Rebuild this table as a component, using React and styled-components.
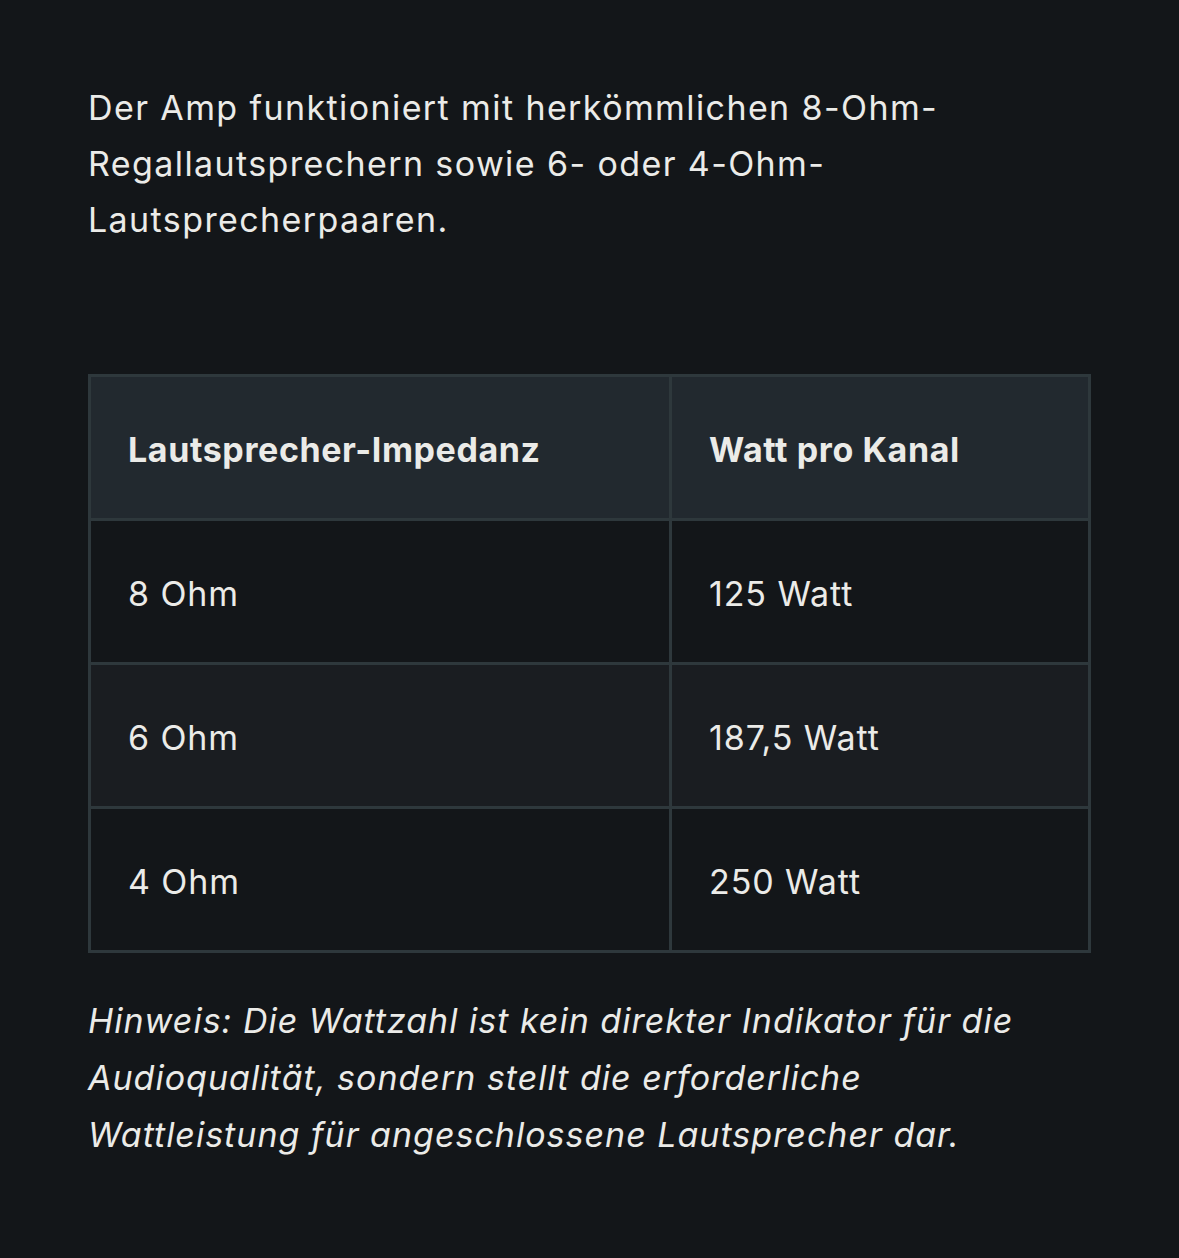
import styled, { createGlobalStyle } from "styled-components";

const GlobalStyle = createGlobalStyle`
  html, body {
    margin: 0;
    padding: 0;
    background: #131619;
  }
`;

const Page = styled.div`
  min-height: 1258px;
  box-sizing: border-box;
  padding: 80px 88px 0 88px;
  background: #131619;
  color: #ebebe8;
  font-family: Inter, "Noto Sans", sans-serif;
`;

const Intro = styled.p`
  margin: 0;
  font-size: 34px;
  line-height: 56px;
  letter-spacing: 1.4px;
  max-width: 900px;
`;

const Table = styled.table`
  margin-top: 126px;
  width: 1003px;
  border-collapse: collapse;
  border: 3px solid #2e383c;
`;

const Row = styled.tr`
  background: ${(p) => (p.$shade ? "#1a1d21" : "#131619")};
`;

const HeadRow = styled.tr`
  background: #22292f;
`;

const Cell = styled.td`
  height: 144px;
  box-sizing: border-box;
  padding: 4px 37px 0 37px;
  border: 3px solid #2e383c;
  font-size: 34px;
  font-weight: ${(p) => (p.$head ? 700 : 400)};
  letter-spacing: ${(p) => (p.$head ? "0.6px" : "0.9px")};
  text-align: left;
  vertical-align: middle;
  width: ${(p) => p.$w || "auto"};
`;

const Note = styled.p`
  margin: 39px 0 0 0;
  font-size: 34px;
  line-height: 57px;
  font-style: italic;
  letter-spacing: 1px;
  max-width: 940px;
`;

const rows = [
  ["8 Ohm", "125 Watt"],
  ["6 Ohm", "187,5 Watt"],
  ["4 Ohm", "250 Watt"],
];

export default function App() {
  return (
    <>
      <GlobalStyle />
      <Page>
        <Intro>
          Der Amp funktioniert mit herkömmlichen 8-Ohm-Regallautsprechern sowie
          6- oder 4-Ohm-Lautsprecherpaaren.
        </Intro>
        <Table>
          <tbody>
            <HeadRow>
              <Cell as="th" $head $w="581px">
                Lautsprecher-Impedanz
              </Cell>
              <Cell as="th" $head>
                Watt pro Kanal
              </Cell>
            </HeadRow>
            {rows.map(([a, b], i) => (
              <Row key={a} $shade={i % 2 === 1}>
                <Cell>{a}</Cell>
                <Cell>{b}</Cell>
              </Row>
            ))}
          </tbody>
        </Table>
        <Note>
          Hinweis: Die Wattzahl ist kein direkter Indikator für die
          Audioqualität, sondern stellt die erforderliche Wattleistung für
          angeschlossene Lautsprecher dar.
        </Note>
      </Page>
    </>
  );
}
